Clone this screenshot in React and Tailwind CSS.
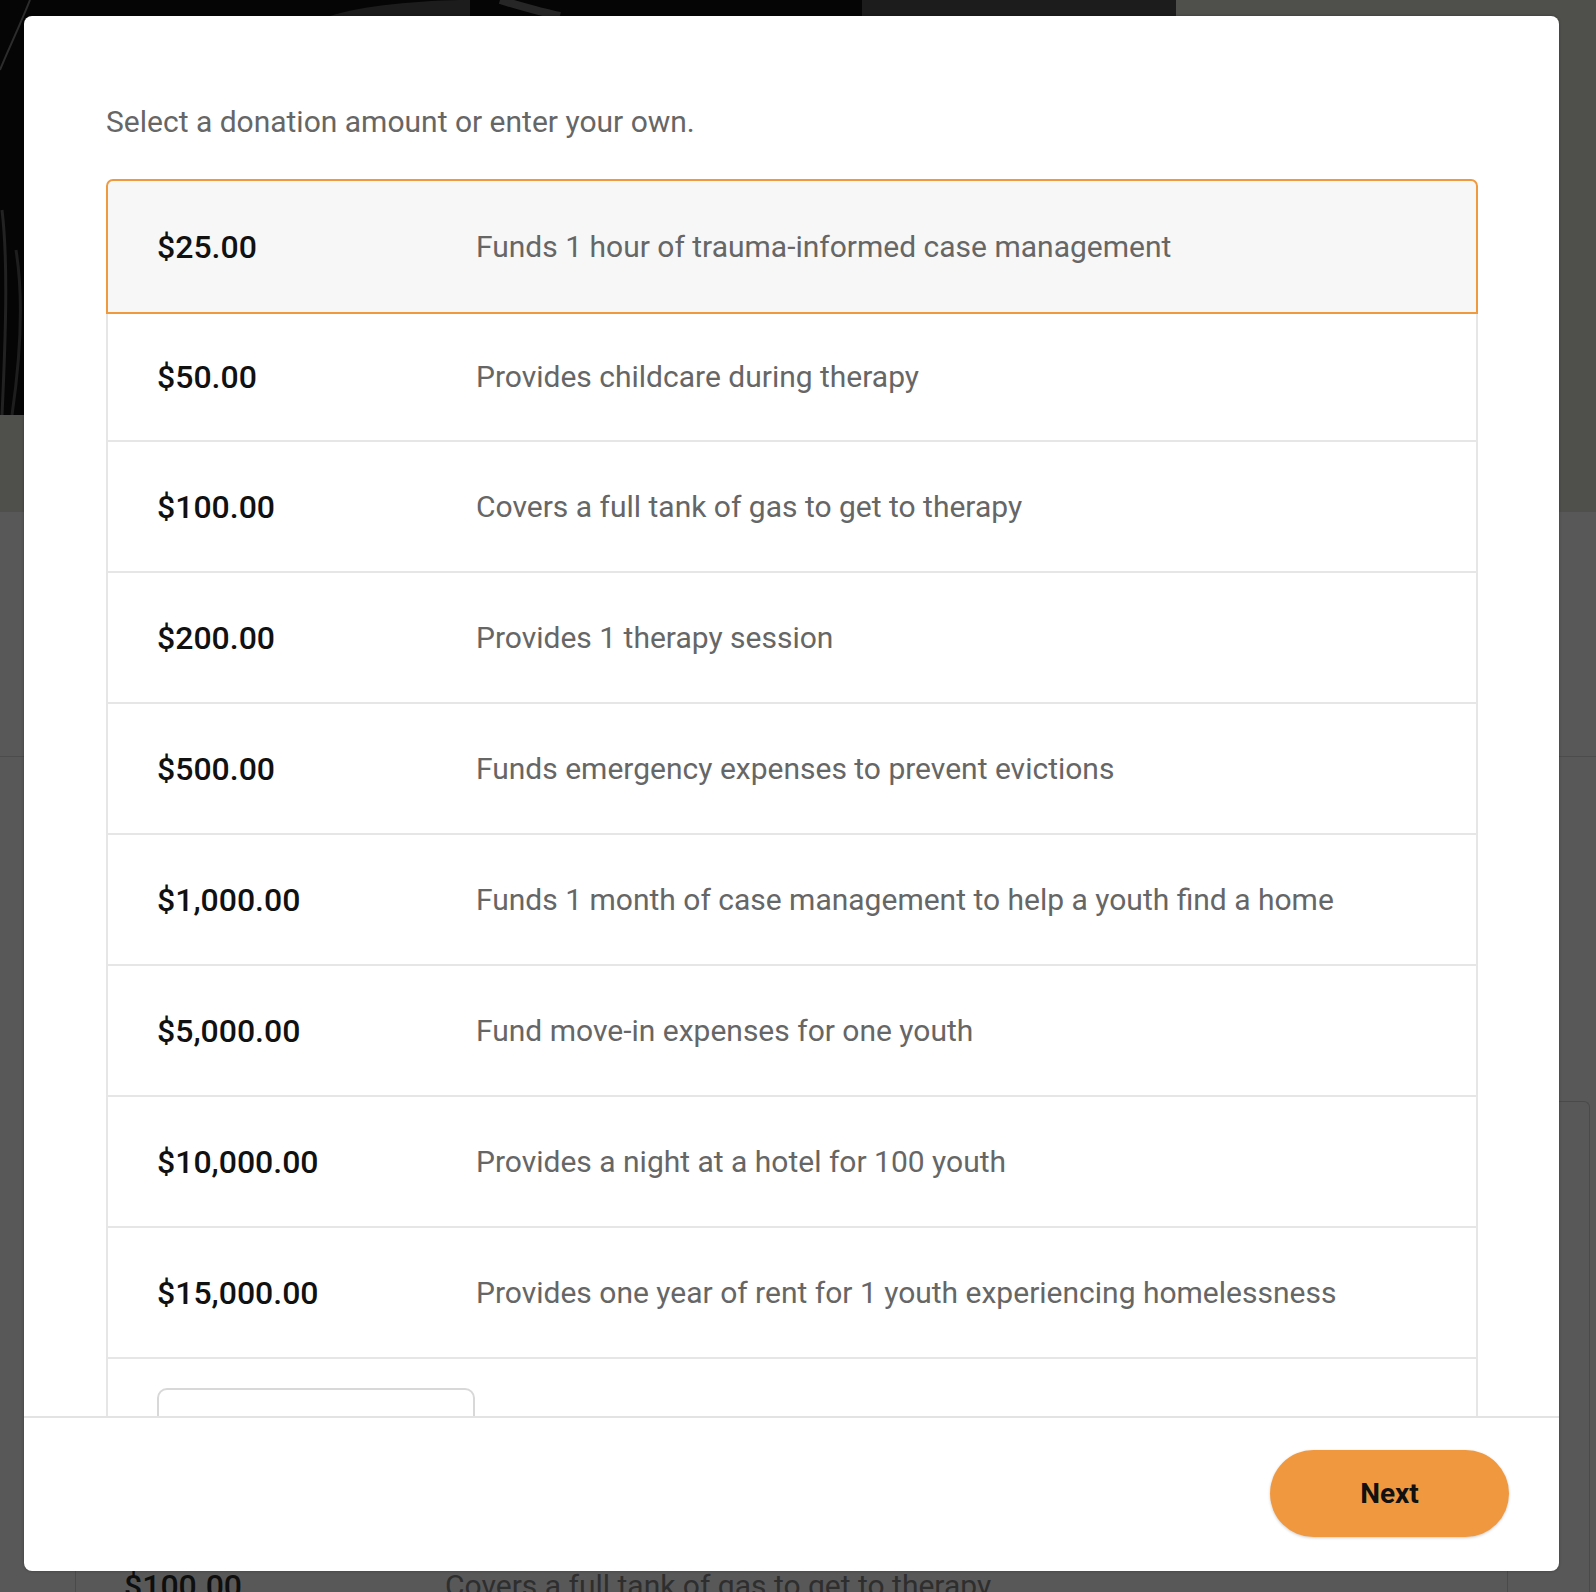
import React from "react";

const rows = [
  ["$25.00", "Funds 1 hour of trauma-informed case management"],
  ["$50.00", "Provides childcare during therapy"],
  ["$100.00", "Covers a full tank of gas to get to therapy"],
  ["$200.00", "Provides 1 therapy session"],
  ["$500.00", "Funds emergency expenses to prevent evictions"],
  ["$1,000.00", "Funds 1 month of case management to help a youth find a home"],
  ["$5,000.00", "Fund move-in expenses for one youth"],
  ["$10,000.00", "Provides a night at a hotel for 100 youth"],
  ["$15,000.00", "Provides one year of rent for 1 youth experiencing homelessness"],
];

function Row({ amount, text, first, second }) {
  if (first) {
    return (
      <div className="h-[135px] flex items-center border-2 border-[#f0993f] rounded-t-[7px] bg-[#f7f7f7] pl-[49px]">
        <div className="w-[319px] text-[32px] leading-[32px] font-medium text-[#111]">{amount}</div>
        <div className="text-[30px] leading-[32px] text-[#666]">{text}</div>
      </div>
    );
  }
  return (
    <div
      className={
        (second ? "h-[128px] " : "h-[131px] ") +
        "flex items-center border-x-2 border-b-2 border-[#e6e6e6] bg-white pl-[49px]"
      }
    >
      <div className="w-[319px] text-[32px] leading-[32px] font-medium text-[#111]">{amount}</div>
      <div className="text-[30px] leading-[32px] text-[#666]">{text}</div>
    </div>
  );
}

export default function App() {
  return (
    <div className="relative w-[1596px] h-[1592px] overflow-hidden bg-[#585858] font-['Roboto',sans-serif]">
      {/* underlying page (dimmed) */}
      <div className="h-[512px] bg-[#4f504b]">
        <div className="relative w-[1176px] h-[415px] bg-[#050505] overflow-hidden">
          <svg className="absolute inset-0" width="1176" height="415" viewBox="0 0 1176 415">
            <path d="M30 0 C 18 30, 8 50, 0 70" stroke="#2c2c2c" strokeWidth="2" fill="none" />
            <path d="M2 210 C 8 260, 6 330, 2 415" stroke="#222" strokeWidth="3" fill="none" />
            <path d="M16 250 C 24 300, 20 360, 12 415" stroke="#1e1e1e" strokeWidth="3" fill="none" />
            <path d="M330 16 C 360 6, 420 0, 470 0 L 470 16 Z" fill="#1c1c1c" />
            <path d="M500 0 C 520 6, 540 12, 560 16" stroke="#262626" strokeWidth="8" fill="none" />
            <rect x="862" y="0" width="314" height="16" fill="#1c1c1c" />
          </svg>
        </div>
      </div>
      <div className="h-[245px] border-b border-[#4c4c4c]"></div>
      <div className="flex">
        <div className="ml-[75px] w-[1433px] h-[835px] border-x border-[#4a4a4a]">
          <div className="pt-[813px] flex items-center pl-[48px]">
            <div className="w-[321px] text-[32px] leading-[32px] font-medium text-[#0e0e0e]">$100.00</div>
            <div className="text-[30px] leading-[32px] text-[#2e2e2e]">Covers a full tank of gas to get to therapy</div>
          </div>
        </div>
        <div className="mt-[344px] ml-[12px] w-[70px] h-[491px] border-t border-r border-[#4a4a4a] rounded-tr-[6px]"></div>
      </div>

      {/* modal */}
      <div className="absolute left-[24px] top-[16px] w-[1535px] h-[1555px] bg-white rounded-[8px] shadow-[0_0_3px_rgba(0,0,0,0.3)] flex flex-col overflow-hidden">
        <div className="h-[1400px] overflow-hidden pl-[82px] pr-[81px] pt-[91px]">
          <p className="text-[30px] leading-[30px] text-[#666]">Select a donation amount or enter your own.</p>
          <div className="mt-[42px] w-[1372px]">
            {rows.map((r, i) => (
              <Row key={r[0]} amount={r[0]} text={r[1]} first={i === 0} second={i === 1} />
            ))}
            <div className="h-[131px] border-x-2 border-[#e6e6e6] pt-[29px] pl-[49px]">
              <div className="w-[318px] h-[80px] border-2 border-[#d8d8d8] rounded-[10px]"></div>
            </div>
          </div>
        </div>
        <div className="h-[155px] border-t-2 border-[#e3e3e3] flex justify-end items-start pt-[32px] pr-[50px]">
          <button className="w-[239px] h-[87px] rounded-full bg-[#f09840] shadow-[0_1px_3px_rgba(0,0,0,0.2)] text-[28px] font-bold text-[#111] flex items-center justify-center">
            Next
          </button>
        </div>
      </div>
    </div>
  );
}
